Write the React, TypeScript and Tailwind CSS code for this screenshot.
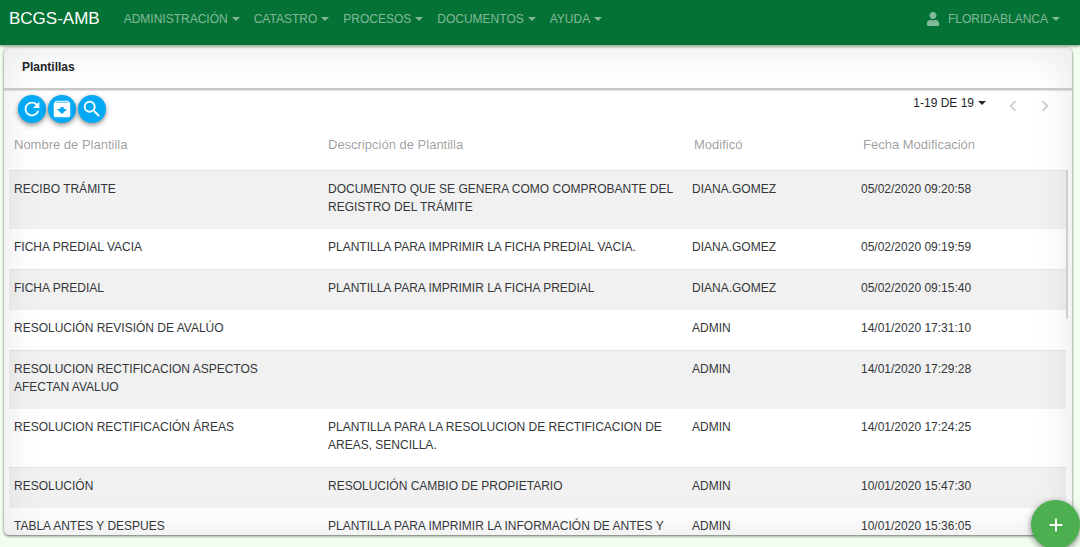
import { FaUser } from "react-icons/fa";
import { MdAdd, MdArchive, MdChevronLeft, MdChevronRight, MdRefresh, MdSearch } from "react-icons/md";
import type { IconType } from "react-icons";

interface Template {
  name: string;
  description: string;
  user: string;
  date: string;
}

const MENUS = ["ADMINISTRACIÓN", "CATASTRO", "PROCESOS", "DOCUMENTOS", "AYUDA"];

const TEMPLATES: Template[] = [
  {
    name: "RECIBO TRÁMITE",
    description: "DOCUMENTO QUE SE GENERA COMO COMPROBANTE DEL REGISTRO DEL TRÁMITE",
    user: "DIANA.GOMEZ",
    date: "05/02/2020 09:20:58",
  },
  {
    name: "FICHA PREDIAL VACIA",
    description: "PLANTILLA PARA IMPRIMIR LA FICHA PREDIAL VACIA.",
    user: "DIANA.GOMEZ",
    date: "05/02/2020 09:19:59",
  },
  {
    name: "FICHA PREDIAL",
    description: "PLANTILLA PARA IMPRIMIR LA FICHA PREDIAL",
    user: "DIANA.GOMEZ",
    date: "05/02/2020 09:15:40",
  },
  {
    name: "RESOLUCIÓN REVISIÓN DE AVALÚO",
    description: "",
    user: "ADMIN",
    date: "14/01/2020 17:31:10",
  },
  {
    name: "RESOLUCION RECTIFICACION ASPECTOS AFECTAN AVALUO",
    description: "",
    user: "ADMIN",
    date: "14/01/2020 17:29:28",
  },
  {
    name: "RESOLUCION RECTIFICACIÓN ÁREAS",
    description: "PLANTILLA PARA LA RESOLUCION DE RECTIFICACION DE AREAS, SENCILLA.",
    user: "ADMIN",
    date: "14/01/2020 17:24:25",
  },
  {
    name: "RESOLUCIÓN",
    description: "RESOLUCIÓN CAMBIO DE PROPIETARIO",
    user: "ADMIN",
    date: "10/01/2020 15:47:30",
  },
  {
    name: "TABLA ANTES Y DESPUES",
    description: "PLANTILLA PARA IMPRIMIR LA INFORMACIÓN DE ANTES Y",
    user: "ADMIN",
    date: "10/01/2020 15:36:05",
  },
];

function Caret() {
  return <span className="border-x-4 border-t-4 border-x-transparent border-t-current" />;
}

function RoundButton({ icon: Icon, label }: { icon: IconType; label: string }) {
  return (
    <button
      type="button"
      aria-label={label}
      className="flex size-7 items-center justify-center rounded-full bg-[#03a9f4] text-white shadow-[0_2px_5px_rgba(0,0,0,0.45)]"
    >
      <Icon className="size-[22px]" />
    </button>
  );
}

function Navbar() {
  return (
    <header className="z-10 flex h-[45px] shrink-0 items-start bg-[#047235] pt-1.5 pr-5 pl-[9px] text-white/50 shadow-[0_1px_3px_rgba(0,0,0,0.5)]">
      <a href="#" className="mr-6 text-[17px] leading-[26px] text-white">
        BCGS-AMB
      </a>
      <nav className="flex gap-3.5">
        {MENUS.map((menu) => (
          <button key={menu} type="button" className="flex items-center gap-1 leading-[26px]">
            {menu}
            <Caret />
          </button>
        ))}
      </nav>
      <button type="button" className="ml-auto flex items-center gap-1 leading-[26px]">
        <FaUser className="mr-1 size-3.5" />
        FLORIDABLANCA
        <Caret />
      </button>
    </header>
  );
}

function Toolbar() {
  return (
    <div className="flex items-start justify-between pt-[5px] pr-4 pl-3.5">
      <div className="flex gap-0.5">
        <RoundButton icon={MdRefresh} label="Actualizar" />
        <RoundButton icon={MdArchive} label="Archivar" />
        <RoundButton icon={MdSearch} label="Buscar" />
      </div>
      <div className="flex items-start text-[#212529]">
        <button type="button" className="mr-4 flex items-center gap-1 leading-4">
          1-19 DE 19
          <Caret />
        </button>
        <button type="button" disabled aria-label="Anterior" className="mr-2.5 text-black/20">
          <MdChevronLeft className="size-[22px]" />
        </button>
        <button type="button" disabled aria-label="Siguiente" className="text-black/20">
          <MdChevronRight className="size-[22px]" />
        </button>
      </div>
    </div>
  );
}

function TemplateTable() {
  return (
    <div className="relative mr-1 ml-[5px] min-h-0 flex-1 overflow-hidden pr-0.5">
      <table className="w-full table-fixed text-left">
        <thead className="text-[13px] text-black/40">
          <tr className="h-[47px] *:pb-0.5 *:font-normal">
            <th className="w-[314px] pl-[5px]">Nombre de Plantilla</th>
            <th className="w-[364px] pl-[5px]">Descripción de Plantilla</th>
            <th className="w-[169px] pl-[7px]">Modificó</th>
            <th className="pl-[7px]">Fecha Modificación</th>
          </tr>
        </thead>
        <tbody className="text-[#33373a]">
          {TEMPLATES.map((t) => (
            <tr
              key={t.date}
              className="align-top odd:border-t odd:border-black/5 odd:bg-black/[0.055] *:pt-[9px] *:pb-[13px] *:pl-[5px]"
            >
              <td className="pr-6">{t.name}</td>
              <td>{t.description}</td>
              <td>{t.user}</td>
              <td>{t.date}</td>
            </tr>
          ))}
        </tbody>
      </table>
      <div className="absolute top-[47px] right-0 h-[149px] w-0.5 bg-[#cbd1d0]" />
    </div>
  );
}

export default function App() {
  return (
    <div className="flex h-screen flex-col overflow-hidden bg-[#f0fff0] font-['Liberation_Sans',Arial,sans-serif] text-[12px] leading-[18px]">
      <Navbar />
      <main className="mx-1 mt-[3px] mr-2 mb-3 flex min-h-0 flex-1 flex-col overflow-hidden rounded-[5px] bg-white shadow-[0_1px_3px_rgba(0,0,0,0.6),inset_0_0_40px_rgba(0,0,0,0.1)]">
        <h1 className="h-[42px] shrink-0 border-b-2 border-[#c8c8c8] pt-2.5 pl-[18px] font-bold text-[#212529] shadow-[0_1px_1px_rgba(0,0,0,0.1)]">
          Plantillas
        </h1>
        <Toolbar />
        <TemplateTable />
      </main>
      <button
        type="button"
        aria-label="Agregar"
        className="fixed right-0 -bottom-0.5 flex size-[49px] items-center justify-center rounded-full bg-[#4caf50] text-white shadow-[0_2px_6px_rgba(0,0,0,0.5)]"
      >
        <MdAdd className="size-[22px]" />
      </button>
    </div>
  );
}
